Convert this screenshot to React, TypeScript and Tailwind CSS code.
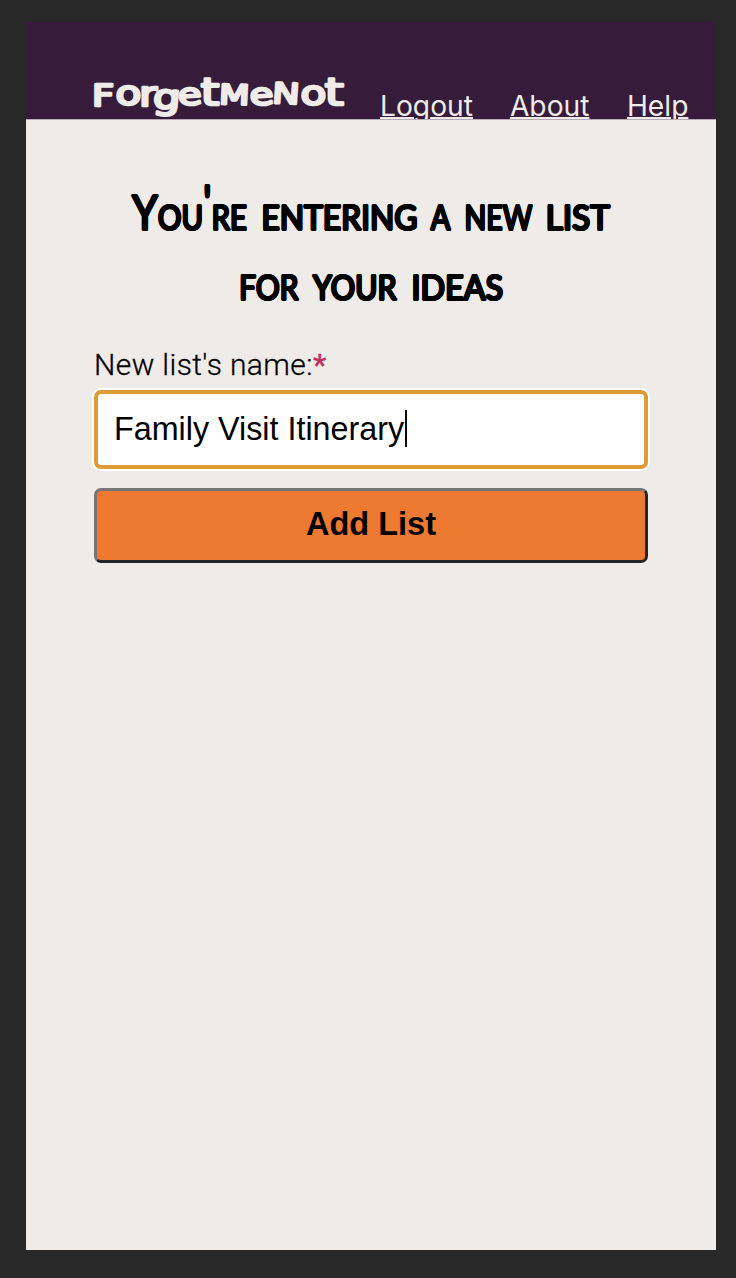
const inkShadow =
  "[text-shadow:1.3px_0_0_#000,-1.3px_0_0_#000,0_1px_0_#000,0_-1px_0_#000,0.9px_0.8px_0_#000,-0.9px_0.8px_0_#000,0.9px_-0.8px_0_#000,-0.9px_-0.8px_0_#000]";

const logoLetters = [
  { char: "F", x: 1.6, y: 106.8, size: 30, tilt: 0 },
  { char: "o", x: 20, y: 106.5, size: 33, tilt: 0 },
  { char: "r", x: 38.2, y: 107, size: 34, tilt: 0 },
  { char: "g", x: 48.6, y: 109, size: 34, tilt: 4 },
  { char: "e", x: 69.5, y: 106.5, size: 30, tilt: -5 },
  { char: "t", x: 86.5, y: 106.5, size: 37, tilt: 0 },
  { char: "M", x: 100.6, y: 105, size: 27.5, tilt: 2 },
  { char: "e", x: 125.5, y: 106.5, size: 30, tilt: -5 },
  { char: "N", x: 142, y: 104, size: 28.5, tilt: 3 },
  { char: "o", x: 164.4, y: 106.5, size: 33, tilt: 0 },
  { char: "t", x: 183.5, y: 106.5, size: 38, tilt: 0 },
];

function Logo() {
  return (
    <svg width="260" height="48" viewBox="90 72 260 48" className="block shrink-0 overflow-visible" aria-label="ForgetMeNot">
      <text
        transform="translate(90 0) scale(1.28 1)"
        fill="#efebe8"
        stroke="#efebe8"
        strokeWidth="2.5"
        strokeLinejoin="round"
        className="font-['DejaVu_Sans',sans-serif]"
      >
        {logoLetters.map((letter, index) => (
          <tspan key={index} x={letter.x} y={letter.y} rotate={letter.tilt} fontSize={letter.size}>
            {letter.char}
          </tspan>
        ))}
      </text>
    </svg>
  );
}

function Header() {
  return (
    <header className="flex h-[98px] shrink-0 items-end overflow-hidden border-b border-[#b9a8ba] bg-[#361c3a] pl-16">
      <Logo />
      <nav className="ml-[30px] flex h-[41px] text-[28.2px] leading-[56px] text-[#efebe8] font-['Inter',sans-serif]">
        <a href="#logout" className="mr-[37px] underline decoration-2 underline-offset-[1px]">Logout</a>
        <a href="#about" className="mr-[37.5px] underline decoration-2 underline-offset-[1px]">About</a>
        <a href="#help" className="underline decoration-2 underline-offset-[1px]">Help</a>
      </nav>
    </header>
  );
}

export default function App() {
  return (
    <div className="flex h-[1278px] w-[736px] bg-[#282828] pt-[22px] pr-5 pb-7 pl-[26px]">
      <div className="flex flex-1 flex-col bg-[#efebe8]">
        <Header />
        <main className="flex flex-col px-[68px] pt-[57px] text-black">
          <h1 className={`text-[48px] leading-[70px] font-normal whitespace-nowrap [font-variant:small-caps] font-['Lato',sans-serif] ${inkShadow}`}>
            <span className="flex justify-center gap-[14px]">
              <span className="flex w-[115px] justify-center"><span className="scale-x-[0.865]">You<span className="relative -top-2.5">'</span>re</span></span>{" "}
              <span className="flex w-[156px] justify-center"><span className="scale-x-[0.935]">entering</span></span>{" "}
              <span className="flex w-[20px] justify-center"><span className="scale-x-[0.85]">a</span></span>{" "}
              <span className="flex w-[67px] justify-center"><span className="scale-x-[0.84]">new</span></span>{" "}
              <span className="flex w-[64px] justify-center"><span className="scale-x-[0.98]">list</span></span>
            </span>{" "}
            <span className="flex justify-center gap-[14px]">
              <span className="flex w-[59px] justify-center"><span className="scale-x-[0.88]">for</span></span>{" "}
              <span className="flex w-[85px] justify-center"><span className="scale-x-[0.895]">your</span></span>{" "}
              <span className="flex w-[92px] justify-center"><span className="scale-x-[0.95]">ideas</span></span>
            </span>
          </h1>
          <label htmlFor="list-name" className="mt-[27px] block h-[46px] text-[30px] leading-[42px] font-light tracking-[0.4px] whitespace-nowrap [-webkit-text-stroke:0.3px] font-['Roboto',sans-serif]">
            New list's name:<span className="font-medium tracking-normal text-[#c32f60]">*</span>
          </label>
          <div className="flex h-[79px] items-center rounded-[7px] border-4 border-[#de9c36] bg-white pl-4 text-[32.3px] shadow-[0_0_0_2px_#fff] font-['Liberation_Sans',Arial,sans-serif]">
            <span id="list-name" className="-mt-px">Family Visit Itinerary</span>
            <span className="-mt-0.5 ml-px h-[37px] w-0.5 bg-black" />
          </div>
          <button className="mt-[19px] h-[75px] rounded-[7px] border-[3px] border-t-[#767676] border-r-[#252525] border-b-[#252525] border-l-[#767676] bg-[#ee7930] pb-0.5 text-[32.5px] font-bold font-['Liberation_Sans',Arial,sans-serif]">
            Add List
          </button>
        </main>
      </div>
    </div>
  );
}
